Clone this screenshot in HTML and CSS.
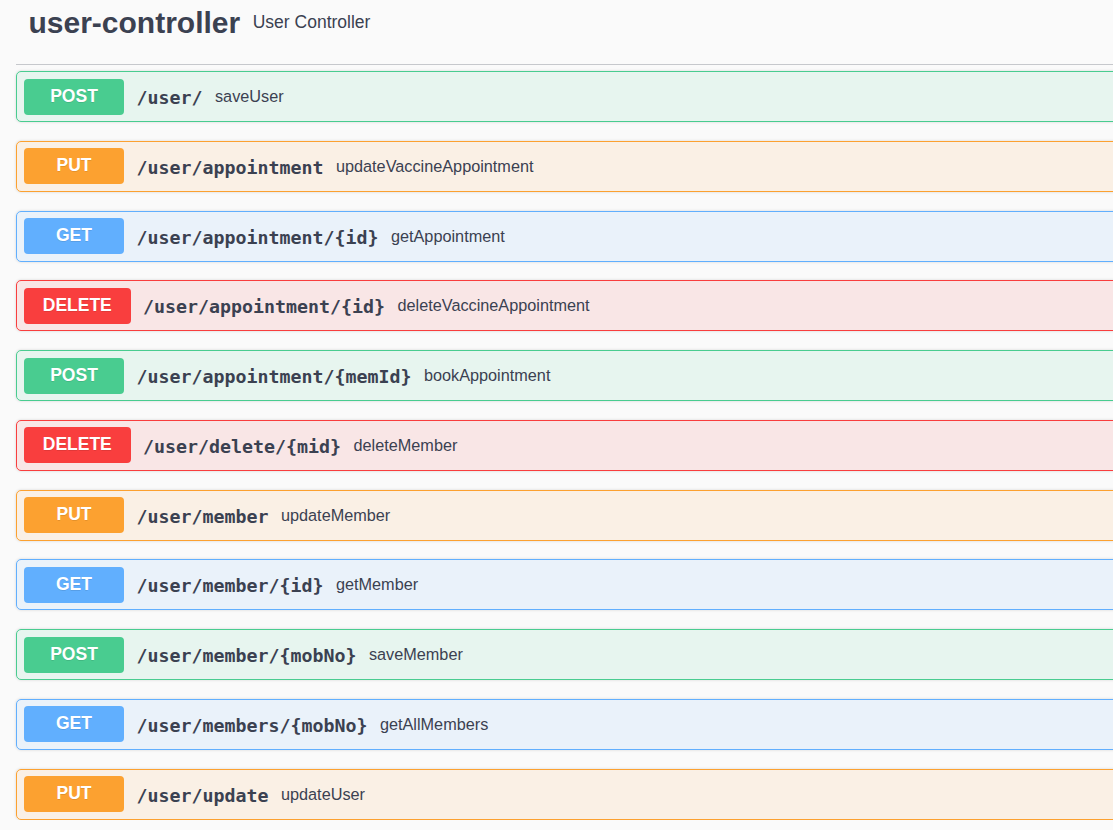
FILE: index.html
```html
<!DOCTYPE html>
<html lang="en">
<head>
<meta charset="utf-8">
<title>user-controller</title>
<link rel="stylesheet" href="styles.css">
</head>
<body>
<div class="section">
  <h3 class="tag">
    <span class="tag-name">user-controller</span>
    <small class="tag-desc">User Controller</small>
  </h3>
  <div class="ops">
    <div class="op op-post"><span class="method">POST</span><span class="path">/user/</span><span class="desc">saveUser</span></div>
    <div class="op op-put"><span class="method">PUT</span><span class="path">/user/appointment</span><span class="desc">updateVaccineAppointment</span></div>
    <div class="op op-get"><span class="method">GET</span><span class="path">/user/appointment/{id}</span><span class="desc">getAppointment</span></div>
    <div class="op op-delete"><span class="method">DELETE</span><span class="path">/user/appointment/{id}</span><span class="desc">deleteVaccineAppointment</span></div>
    <div class="op op-post"><span class="method">POST</span><span class="path">/user/appointment/{memId}</span><span class="desc">bookAppointment</span></div>
    <div class="op op-delete"><span class="method">DELETE</span><span class="path">/user/delete/{mid}</span><span class="desc">deleteMember</span></div>
    <div class="op op-put"><span class="method">PUT</span><span class="path">/user/member</span><span class="desc">updateMember</span></div>
    <div class="op op-get"><span class="method">GET</span><span class="path">/user/member/{id}</span><span class="desc">getMember</span></div>
    <div class="op op-post"><span class="method">POST</span><span class="path">/user/member/{mobNo}</span><span class="desc">saveMember</span></div>
    <div class="op op-get"><span class="method">GET</span><span class="path">/user/members/{mobNo}</span><span class="desc">getAllMembers</span></div>
    <div class="op op-put"><span class="method">PUT</span><span class="path">/user/update</span><span class="desc">updateUser</span></div>
  </div>
</div>
</body>
</html>
```

FILE: styles.css
```css
html, body {
  margin: 0;
  padding: 0;
  background: #fafafa;
  overflow: hidden;
}

body {
  font-family: "Liberation Sans", Arial, sans-serif;
  color: #3b4151;
}

.section {
  width: 1140px;
  padding-left: 16px;
}

.tag {
  display: flex;
  align-items: center;
  margin: 0 0 6px 0;
  padding: 5px 0 23px 12.5px;
  border-bottom: 1px solid #c6c8cc;
  font-weight: normal;
}

.tag-name {
  font-size: 30px;
  font-weight: bold;
  line-height: 36px;
}

.tag-desc {
  font-size: 17.5px;
  padding: 0 12.5px;
  line-height: 20px;
  position: relative;
  top: -1px;
}

.ops {
  display: flex;
  flex-direction: column;
  gap: 18.75px;
}

.op {
  display: flex;
  align-items: center;
  height: 51px;
  box-sizing: border-box;
  padding: 0 7px;
  border: 1px solid;
  border-radius: 5px;
  box-shadow: 0 0 3px rgba(0, 0, 0, 0.15);
}

.method {
  box-sizing: border-box;
  min-width: 100px;
  height: 36px;
  line-height: 34px;
  padding: 0 18.75px;
  border-radius: 4px;
  text-align: center;
  font-size: 17.5px;
  font-weight: bold;
  color: #fff;
  text-shadow: 0 1px 0 rgba(0, 0, 0, 0.1);
}

.path {
  font-family: "DejaVu Sans Mono", "Liberation Mono", monospace;
  font-weight: bold;
  font-size: 18.27px;
  padding: 0 12.5px;
  color: #3b4151;
  position: relative;
  top: 1px;
}

.desc {
  font-size: 16.25px;
  color: #3b4151;
}

.op-post { border-color: #49cc90; background: rgba(73, 204, 144, 0.1); }
.op-post .method { background: #49cc90; }

.op-put { border-color: #fca130; background: rgba(252, 161, 48, 0.1); }
.op-put .method { background: #fca130; }

.op-get { border-color: #61affe; background: rgba(97, 175, 254, 0.1); }
.op-get .method { background: #61affe; }

.op-delete { border-color: #f93e3e; background: rgba(249, 62, 62, 0.1); }
.op-delete .method { background: #f93e3e; }
```
